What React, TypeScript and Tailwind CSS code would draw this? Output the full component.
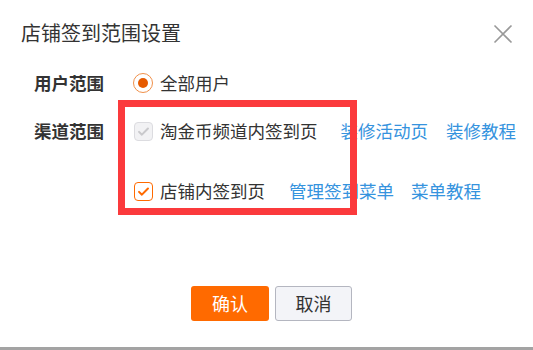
import React from 'react';

const font = { fontFamily: '"Noto Sans CJK SC", "Noto Sans", sans-serif' };

// Small checkbox used in the channel rows
const Check = ({ checked, disabled }: { checked?: boolean; disabled?: boolean }) => {
  const box = disabled
    ? 'bg-[#f2f2f4] border-[#dcdce0]'
    : 'bg-white border-[#ff6a00]';
  const stroke = disabled ? '#c9c9cc' : '#ff6a00';
  return (
    <span className={`flex h-[19px] w-[19px] shrink-0 items-center justify-center rounded-[4px] border ${box}`}>
      {checked && (
        <svg width="13" height="13" viewBox="0 0 14 14" fill="none">
          <path d="M2.2 7.4l3.1 3 6.5-6.6" stroke={stroke} strokeWidth="2.2" strokeLinecap="round" strokeLinejoin="round" />
        </svg>
      )}
    </span>
  );
};

const Link = ({ children }: { children: React.ReactNode }) => (
  <span className="text-[#3593de]">{children}</span>
);

export default function App() {
  return (
    <div style={font} className="relative h-[350px] w-[533px] overflow-hidden border-b-[3px] border-[#a3a3a3] bg-white text-[#333]">
      {/* header */}
      <div className="flex items-center justify-between pl-[21px] pr-[20px] pt-[21px]">
        <h1 className="text-[20px] leading-[24px] text-[#333]">店铺签到范围设置</h1>
        <svg width="20" height="20" viewBox="0 0 20 20" className="mt-[1px]">
          <path d="M1.5 1.5l17 17M18.5 1.5l-17 17" stroke="#999" strokeWidth="1.6" />
        </svg>
      </div>

      {/* form */}
      <div className="mt-[27px] pl-[34px] text-[17.5px] leading-[22px]">
        <div className="flex items-center">
          <span className="w-[99px] font-bold">用户范围</span>
          <span className="flex h-[20px] w-[20px] items-center justify-center rounded-full border-[1.5px] border-[#f0904a]">
            <span className="h-[10px] w-[10px] rounded-full bg-[#e65a00]" />
          </span>
          <span className="ml-[7px]">全部用户</span>
        </div>

        <div className="mt-[26px] flex">
          <span className="w-[100px] font-bold">渠道范围</span>
          <div className="flex flex-col gap-[38px]">
            <div className="flex items-center">
              <Check checked disabled />
              <span className="ml-[7px]">淘金币频道内签到页</span>
              <span className="ml-[23px]"><Link>装修活动页</Link></span>
              <span className="ml-[18px]"><Link>装修教程</Link></span>
            </div>
            <div className="flex items-center">
              <Check checked />
              <span className="ml-[7px]">店铺内签到页</span>
              <span className="ml-[24px]"><Link>管理签到菜单</Link></span>
              <span className="ml-[17px]"><Link>菜单教程</Link></span>
            </div>
          </div>
        </div>
      </div>

      {/* footer buttons */}
      <div className="absolute left-0 right-0 top-[286px] flex pl-[191px] gap-[6px] text-[18px]">
        <button className="h-[35px] w-[78px] rounded-[3px] bg-[#ff6a00] text-white">确认</button>
        <button className="h-[35px] w-[77px] rounded-[3px] border border-[#b4b6c0] bg-[#f3f4f8] text-[#333]">取消</button>
      </div>

      {/* red annotation box over the channel options */}
      <div className="absolute left-[118px] top-[100px] h-[115px] w-[239px] border-[7px] border-[#fb3a3c]" />
    </div>
  );
}
